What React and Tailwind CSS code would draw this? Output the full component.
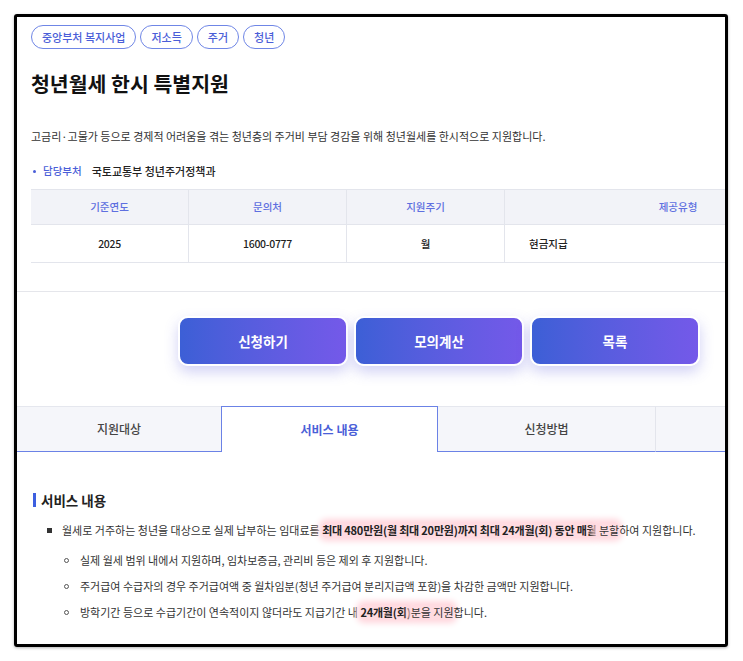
import React from "react";

const tags = ["중앙부처 복지사업", "저소득", "주거", "청년"];

const Hl = ({ children, bold }) => (
  <span
    className={`rounded-sm bg-[#ffdbe1] shadow-[0_0_6px_3px_#ffd6dd] ${
      bold ? "font-bold text-[#222] tracking-[-0.2px]" : ""
    }`}
  >
    {children}
  </span>
);

const SubItem = ({ children }) => (
  <li className="flex items-center h-5 pl-[47px]">
    <span className="w-[5px] h-[5px] rounded-full border border-[#555] mr-[11px]" />
    <span>{children}</span>
  </li>
);

const App = () => {
  return (
    <div
      className="w-[743px] h-[661px] bg-white pt-[14px] pl-[14px]"
      style={{ fontFamily: '"Noto Sans CJK KR", "Noto Sans", sans-serif' }}
    >
      <div className="w-[714px] h-[633px] border-[3px] border-black rounded-[3px] overflow-hidden shadow-[0_1px_3px_rgba(0,0,0,0.3)]">
        <div className="pt-2">
          {/* tags */}
          <div className="flex gap-[4px] pl-[14px]">
            {tags.map((t) => (
              <span
                key={t}
                className="h-6 px-[10px] flex items-center rounded-full border border-[#6f86e6] text-[11px] text-[#4a5ed8] font-medium"
              >
                {t}
              </span>
            ))}
          </div>

          <h1 className="mt-5 pl-[14px] text-[20.5px] leading-7 font-bold text-[#111]">
            청년월세 한시 특별지원
          </h1>

          <p className="mt-[30px] pl-[14px] text-[11px] leading-[18px] text-[#333]">
            고금리·고물가 등으로 경제적 어려움을 겪는 청년층의 주거비 부담 경감을 위해 청년월세를 한시적으로 지원합니다.
          </p>

          <div className="mt-[17px] pl-[14px] flex items-center leading-[18px]">
            <span className="w-[3px] h-[3px] rounded-full bg-[#4a5ed8] mx-[2px]" />
            <span className="ml-[5px] text-[10.5px] text-[#4a5ed8] font-medium">담당부처</span>
            <span className="ml-[10px] text-[11px] text-[#222] font-medium">국토교통부 청년주거정책과</span>
          </div>

          {/* table */}
          <div className="mt-[9px] pl-[14px]">
            <div className="w-[820px] text-[10.5px]">
              <div className="flex h-[36px] bg-[#f2f3f8] border-t border-b border-[#e3e5ec] text-[#5e6fe0] font-medium">
                <div className="w-[158px] flex items-center justify-center border-r border-[#e3e5ec]">기준연도</div>
                <div className="w-[158px] flex items-center justify-center border-r border-[#e3e5ec]">문의처</div>
                <div className="w-[158px] flex items-center justify-center border-r border-[#e3e5ec]">지원주기</div>
                <div className="w-[346px] flex items-center justify-center">제공유형</div>
              </div>
              <div className="flex h-[38px] border-b border-[#e3e5ec] text-[#222] font-medium">
                <div className="w-[158px] flex items-center justify-center border-r border-[#e3e5ec] tracking-[-0.3px]">2025</div>
                <div className="w-[158px] flex items-center justify-center border-r border-[#e3e5ec] tracking-[-0.3px]">1600-0777</div>
                <div className="w-[158px] flex items-center justify-center border-r border-[#e3e5ec]">월</div>
                <div className="w-[346px] flex items-center pl-6">현금지급</div>
              </div>
            </div>
          </div>

          <div className="mt-[28px] border-t border-[#e5e6eb]" />

          {/* buttons */}
          <div className="mt-[24px] ml-[161px] flex gap-[6px]">
            {["신청하기", "모의계산", "목록"].map((b) => (
              <button
                key={b}
                className="w-[170px] h-[50px] rounded-[10px] border-2 border-white bg-gradient-to-r from-[#3c5fd6] to-[#7459e9] text-white text-[13.5px] font-bold shadow-[0_6px_14px_rgba(90,90,220,0.28)]"
              >
                {b}
              </button>
            ))}
          </div>

          {/* tabs */}
          <div className="mt-[40px] flex h-[46px] text-[12px]">
            <div className="w-[204px] flex items-center justify-center bg-[#f5f6fa] border-t border-[#e5e7ee] border-b border-b-[#6b82e6] text-[#444] font-medium">
              지원대상
            </div>
            <div className="w-[217px] flex items-center justify-center bg-white border-t border-l border-r border-[#6b82e6] text-[#4a60d8] font-bold">
              서비스 내용
            </div>
            <div className="w-[218px] flex items-center justify-center bg-[#f5f6fa] border-t border-[#e5e7ee] border-r border-r-[#e3e5ec] border-b border-b-[#6b82e6] text-[#444] font-medium">
              신청방법
            </div>
            <div className="flex-1 bg-[#f5f6fa] border-t border-[#e5e7ee] border-b border-b-[#6b82e6]" />
          </div>

          {/* content */}
          <div className="mt-[38px] pl-[16px] flex items-center h-5">
            <span className="w-[3px] h-[14px] bg-[#3d5fe0]" />
            <span className="ml-[5px] text-[13.5px] font-bold text-[#222]">서비스 내용</span>
          </div>

          <ul className="mt-[10px] text-[11px] text-[#333]">
            <li className="flex items-center h-5 pl-[30px] whitespace-nowrap">
              <span className="w-[5px] h-[5px] bg-[#333] mr-[10px]" />
              <span>
                월세로 거주하는 청년을 대상으로 실제 납부하는 임대료를{" "}
                <Hl bold>최대 480만원(월 최대 20만원)까지 최대 24개월(회) 동안 매월</Hl>
                <Hl> 분할</Hl>하여 지원합니다.
              </span>
            </li>
          </ul>
          <ul className="mt-[10px] flex flex-col gap-[6px] text-[11px] text-[#333]">
            <SubItem>실제 월세 범위 내에서 지원하며, 임차보증금, 관리비 등은 제외 후 지원합니다.</SubItem>
            <SubItem>주거급여 수급자의 경우 주거급여액 중 월차임분(청년 주거급여 분리지급액 포함)을 차감한 금액만 지원합니다.</SubItem>
            <SubItem>
              방학기간 등으로 수급기간이 연속적이지 않더라도 지급기간 내 <Hl bold>24개월(회)</Hl>
              <Hl>분을 지원</Hl>합니다.
            </SubItem>
          </ul>
        </div>
      </div>
    </div>
  );
};

export default App;
